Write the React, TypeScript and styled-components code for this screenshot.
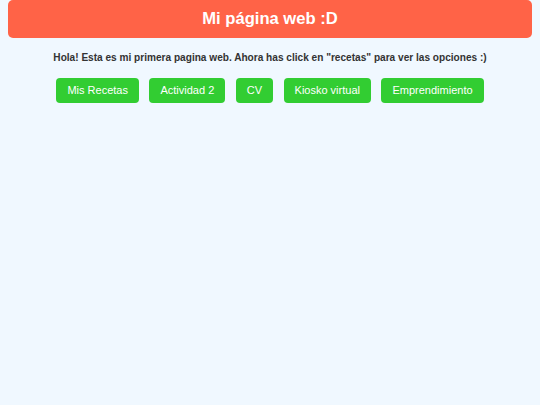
import React from 'react';
import styled, { createGlobalStyle } from 'styled-components';

const GlobalStyle = createGlobalStyle`
  html, body {
    margin: 0;
    padding: 0;
    background: #f0f8ff;
    font-family: Arial, "Liberation Sans", sans-serif;
  }
`;

const links = ['Mis Recetas', 'Actividad 2', 'CV', 'Kiosko virtual', 'Emprendimiento'];

const App = () => {
  return (
    <>
      <GlobalStyle />
      <Page>
        <Header>
          <Title>Mi página web :D</Title>
        </Header>
        <Intro>
          Hola! Esta es mi primera pagina web. Ahora has click en "recetas" para ver las opciones :)
        </Intro>
        <Menu>
          {links.map((label) => (
            <MenuButton key={label}>{label}</MenuButton>
          ))}
        </Menu>
      </Page>
    </>
  );
};

export default App;

const Page = styled.div`
  display: flex;
  flex-direction: column;
  align-items: stretch;
  min-height: 405px;
`;

const Header = styled.header`
  margin: 0 8px;
  height: 38px;
  display: flex;
  align-items: center;
  justify-content: center;
  background: #ff6347;
  border-radius: 5px;
`;

const Title = styled.h1`
  margin: 0;
  color: #ffffff;
  font-size: 16.6px;
  font-weight: bold;
`;

const Intro = styled.p`
  margin: 14px 0 0;
  text-align: center;
  color: #333333;
  font-size: 10.1px;
  line-height: 12px;
  font-weight: bold;
`;

const Menu = styled.nav`
  margin-top: 14px;
  display: flex;
  justify-content: center;
  gap: 10.5px;
`;

const MenuButton = styled.button`
  height: 25px;
  border: none;
  border-radius: 4px;
  background: #32cd32;
  color: #ffffff;
  font-family: Arial, "Liberation Sans", sans-serif;
  font-size: 11px;
  line-height: 13px;
  padding: 0 11px;
  cursor: pointer;
`;
